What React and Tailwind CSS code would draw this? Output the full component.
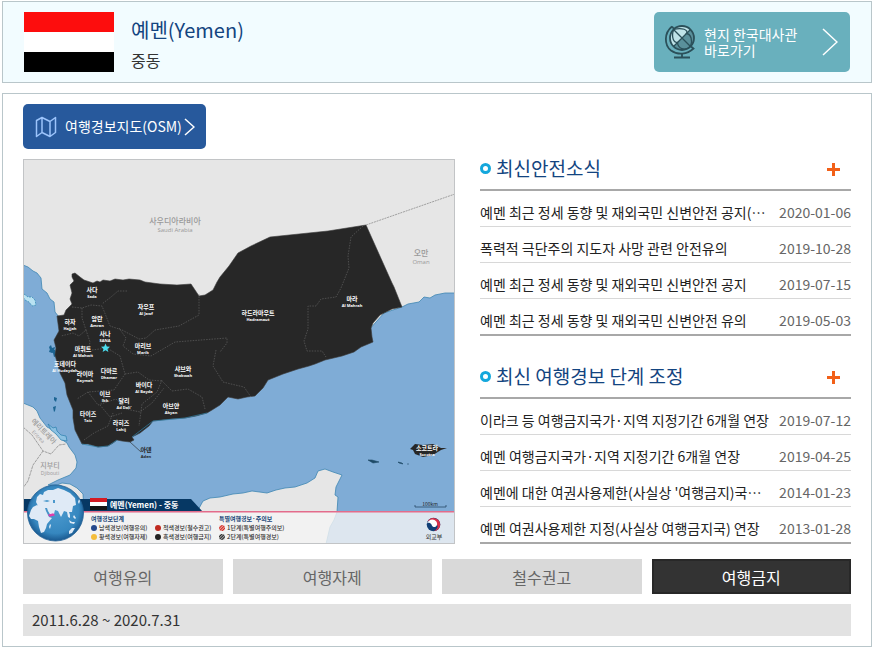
import React from "react";

const news = [
  ["예멘 최근 정세 동향 및 재외국민 신변안전 공지(…", "2020-01-06"],
  ["폭력적 극단주의 지도자 사망 관련 안전유의", "2019-10-28"],
  ["예멘 최근 정세 동향 및 재외국민 신변안전 공지", "2019-07-15"],
  ["예멘 최근 정세 동향 및 재외국민 신변안전 유의", "2019-05-03"],
];

const alerts = [
  ["이라크 등 여행금지국가·지역 지정기간 6개월 연장", "2019-07-12"],
  ["예멘 여행금지국가·지역 지정기간 6개월 연장", "2019-04-25"],
  ["예멘에 대한 여권사용제한(사실상 '여행금지)국…", "2014-01-23"],
  ["예멘 여권사용제한 지정(사실상 여행금지국) 연장", "2013-01-28"],
];

const levels = ["여행유의", "여행자제", "철수권고", "여행금지"];

// Governorate labels: Korean name, Latin name, centre x, baseline y
const regions = [
  ["사다", "Sada", 92, 292],
  ["자우프", "Al Jawf", 146, 309],
  ["하자", "Hajjah", 70, 324],
  ["암란", "Amran", 97, 321],
  ["사나", "SANA", 105, 336],
  ["마휘트", "Al Mahwit", 83, 351],
  ["마리브", "Marib", 143, 348],
  ["호데이다", "Al Hudaydah", 65, 366],
  ["라이마", "Raymah", 85, 376],
  ["다마르", "Dhamar", 109, 373],
  ["샤브와", "Shabwah", 183, 371],
  ["바이다", "Al Bayda", 144, 387],
  ["이브", "Ibb", 105, 396],
  ["달리", "Ad Dali'", 124, 403],
  ["아브얀", "Abyan", 171, 408],
  ["타이즈", "Taiz", 88, 416],
  ["라히즈", "Lahij", 121, 425],
  ["하드라마우트", "Hadramaut", 258, 315],
  ["마라", "Al Mahrah", 352, 301],
  ["소코트라", "Socotra", 427, 450],
];

const legend = [
  ["#26498c", "남색경보(여행유의)", 94, 528],
  ["#f4bd3c", "황색경보(여행자제)", 94, 537],
  ["#c02a20", "적색경보(철수권고)", 158, 528],
  ["#222222", "흑색경보(여행금지)", 158, 537],
  ["url(#hatchRed)", "1단계(특별여행주의보)", 222, 528],
  ["url(#hatchDark)", "2단계(특별여행경보)", 222, 537],
];

function YemenMap() {
  return (
    <svg viewBox="23 159 432 385" className="block h-auto w-full" role="img" aria-label="예멘 여행경보 지도">
      <defs>
        <pattern id="hatchRed" width="2" height="2" patternUnits="userSpaceOnUse" patternTransform="rotate(45)">
          <rect width="2" height="2" fill="#f3c9c6" />
          <rect width="1.2" height="2" fill="#d0241c" />
        </pattern>
        <pattern id="hatchDark" width="2" height="2" patternUnits="userSpaceOnUse" patternTransform="rotate(45)">
          <rect width="2" height="2" fill="#cccccc" />
          <rect width="1.2" height="2" fill="#222222" />
        </pattern>
        <radialGradient id="ocean" cx="50%" cy="45%" r="55%">
          <stop offset="0" stopColor="#4c9bd0" />
          <stop offset="0.75" stopColor="#3687bf" />
          <stop offset="1" stopColor="#19588f" />
        </radialGradient>
      </defs>
      <rect x="23" y="159" width="432" height="385" fill="#e6e6e6" />
      {/* Sea */}
      <path
        d="M23 265 L28 267 33 271 37 273 41 278 42 289 47 293 50 299 54 302 55 312 59 317 200 330 360 340 384 313 402 307 408 304 419 302 424 297 430 298 435 295 445 293 455 293 V544 H326 L330 527 334 520 337 512 338 497 335 495 336 487 339 481 342 475 333 472 325 469 318 471 315 478 307 483 295 487 285 488 276 490 267 493 252 491 243 493 233 494 220 497 210 498 203 501 197 512 H84 L83 494 77 488 70 484 62 483 57 485 48 485 58 480 70 475 76 468 77 462 75 455 69 447 67 443 61 439 53 430 47 427 40 418 37 411 33 407 23 403Z"
        fill="#7facd6"
        stroke="#3f86b3"
        strokeWidth="0.8"
      />
      {/* Red Sea islands */}
      <g fill="#1c6492">
        <path d="M49 347l2-2 1 3 3-1-1 4 2 4-2 1-1-4-2 1zM50 349l5 1 2 6-3 1-1-4-4-1zM54 397l3 1-1 4-2-2zM53 407l3-1-1 5-1 1z" />
      </g>
      <path d="M24 294l4 3 4 0 3 3 1 5-4 1-3-4-4-2-2-3z" fill="#b9e2f2" stroke="#2b87b0" strokeWidth="0.7" strokeDasharray="2 1" />
      <path d="M48 424l5 4 3-1 1 4 4 4 5 1 1 5-6-1-5-6-5-4z" fill="#8cc1e2" stroke="#2b7fae" strokeWidth="0.7" />
      {/* Yemen */}
      <path
        d="M75 273 L80 277 84 280 87 281 93 283 97 281 100 282 103 280 110 281 115 279 123 280 129 279 140 280 145 282 160 284 177 285 191 284 199 296 205 295 213 290 217 282 220 277 229 266 238 253 251 246 270 237 328 231 366 225 392 283 394 287 402 307 392 309 380 315 373 323 371 328 372 337 373 342 361 347 354 352 342 356 325 360 315 364 309 366 298 369 283 374 268 380 263 388 255 396 247 397 238 399 228 397 220 405 212 410 207 413 196 416 185 418 170 419 153 421 149 426 140 433 132 437 134 440 130 442 122 441 117 440 113 443 108 446 98 447 88 444 82 444 75 430 73 418 73 410 67 395 65 383 60 373 57 362 55 355 56 348 54 340 59 331 57 316 64 315 66 310 72 304 70 299 72 293 70 285 74 281 72 277 72 274Z"
        fill="#272727"
        stroke="#3a3a3a"
        strokeWidth="0.6"
      />
      <path d="M82 444 L98 447 108 446 117 440 M132 437 L153 421 185 418 207 413" fill="none" stroke="#2f81a8" strokeWidth="0.7" />
      <path d="M410 449l5-5 8 1 10-1 8 4 6 0-6 2-8 5-10 2-8-3-2-4z" fill="#272727" />
      <path d="M368 460l4 0 7 2-6 1zM398 462l4 1 1 1-4-1zM407 464h2" fill="#1e4a66" stroke="#1e4a66" strokeWidth="0.6" />
      {/* Inner boundaries */}
      <g fill="none" stroke="#777777" strokeWidth="0.5" strokeDasharray="1.5 1.2">
        <path d="M127 291l-9 0-7 6-9 7M72 307l10 1 9-3 11 1 4 10 4 10 12 4 17 9 7-1 9-8 24-4 20-11v-21M82 308v10l4 12-7 6-6-3-12 3M86 330l4 12-2 10h-15M119 328l7 10-3 8 10 8 18 2 24-14 52-4 0 5-7 9" />
        <path d="M92 350l15-2 13 8 5 18-11 16-26 2-11 7M125 374l13-2 11 8 13 1 10 10 16-2 14 8 3 12M88 392l10 13 18-6 10 10 14 3 12-9 12-15M100 405l10 12 12-4M84 440l10-7 14-7 5-13M162 380l-5 12-15 12-3 22M216 350l-3 16 10 16 8 2 13 3 7 10" />
        <path d="M363 226l-12 11-3 19 1 12-8 20-5 9-15 2-5 7h-8v23l-4 12 3 10h15l4 6" />
      </g>
      <g fill="none" stroke="#8d8d8d" strokeWidth="0.8">
        <path d="M366 225l89-31" strokeDasharray="2 0.8" />
        <path d="M23 427l9 8 11 16 8 3 8-9 7-1M43 451l-10 14-5 16-5 7" strokeDasharray="3 0.7" />
      </g>
      <path d="M105.500 343.500l1.300 3 3.200.2-2.500 2.200.9 3.200-2.900-1.800-2.900 1.800.9-3.200-2.500-2.200 3.200-.2z" fill="#4bdcee" />
      <g textAnchor="middle">
        {regions.map(([ko, en, x, y]) => (
          <g key={en} fill="#ffffff">
            <text x={x} y={y} fontSize="6" fontWeight="700">{ko}</text>
            <text x={x} y={Number(y) + 6} fontSize="4" fontWeight="700" className="font-['Open_Sans',sans-serif]">{en}</text>
          </g>
        ))}
        <g fill="#222222" fontWeight="700">
          <text x="146" y="452" fontSize="6">아덴</text>
          <text x="146" y="458" fontSize="4" className="font-['Open_Sans',sans-serif]">Aden</text>
        </g>
        <path d="M130 442l11 10" stroke="#222222" strokeWidth="0.6" />
        <g fill="#999999" fontWeight="500">
          <text x="175" y="224" fontSize="8">사우디아라비아</text>
          <text x="175" y="232" fontSize="6" className="font-['Open_Sans',sans-serif]">Saudi Arabia</text>
          <text x="421" y="256" fontSize="8">오만</text>
          <text x="421" y="264" fontSize="6" className="font-['Open_Sans',sans-serif]">Oman</text>
          <text x="50" y="468" fontSize="7">지부티</text>
          <text x="50" y="475" fontSize="5" className="font-['Open_Sans',sans-serif]">Djibouti</text>
          <g transform="rotate(46 42 433)">
            <text x="42" y="433" fontSize="7">에리트레아</text>
            <text x="42" y="440" fontSize="5" className="font-['Open_Sans',sans-serif]">Eritrea</text>
          </g>
        </g>
      </g>
      {/* Scale bar */}
      <path d="M415 505v2h31v-2" fill="none" stroke="#294a68" strokeWidth="0.8" />
      <text x="430" y="506" fontSize="5" textAnchor="middle" fill="#222222">100km</text>
      {/* Title banner and legend */}
      <path d="M23 499h168l12 13H23z" fill="#063864" />
      <rect x="23" y="512" width="432" height="32" fill="#f5f5f5" fillOpacity="0.8" />
      <rect x="23" y="511" width="432" height="1.500" fill="#e36c8b" />
      <rect x="90" y="498" width="17" height="4" fill="#d51b23" />
      <rect x="90" y="502" width="17" height="4" fill="#ffffff" />
      <rect x="90" y="506" width="17" height="4" fill="#151515" />
      <text x="110" y="508" fontSize="8" fontWeight="700" fill="#ffffff">예멘(Yemen) - 중동</text>
      <g fontSize="6" fontWeight="700" fill="#164375">
        <text x="91" y="521">여행경보단계</text>
        <text x="219" y="521">특별여행경보·주의보</text>
      </g>
      {legend.map(([color, label, x, y]) => (
        <g key={label}>
          <circle cx={x} cy={y} r="3" fill={color} />
          <text x={Number(x) + 5} y={Number(y) + 2} fontSize="6" fontWeight="500" fill="#333333">{label}</text>
        </g>
      ))}
      {/* Globe */}
      <circle cx="55.500" cy="513" r="28" fill="url(#ocean)" stroke="#215f94" strokeWidth="0.8" />
      <g fill="#dfeaf6">
        <path d="M36 502l1-5 3-3 3 1 1-3 4-2 5 0 5-2 6 2 6 3 5 5 1 7-3 1-1 6-3 0 1 3 0 3-2-1-1-5-3-1-3 6-3-6-3-1-1 4-3 2-3-5-1-3-4 0-3 0-2-2z" />
        <path d="M31 510l2-3 4-2 4 2 4 1 1 3 3 6 3 1-5 6-1 4-2 4-3 1-2-6-1-6-4-2-3 0-2-3zM69 520l3 2 3 0-1 2-4-1zM74 515l2 3-1 1-2-2zM78 502l1-3 1 2-1 3zM69 531l3-3 3 0-3 5-3 1zM49 527l1-3 1 1-1 4z" />
      </g>
      <path d="M43 501l4-1 3 1-3 1zM53 500l2 0 0 3-2 0z" fill="#4b98cc" />
      <path d="M49 515l4-1 1 1-4 1z" fill="#df3bab" stroke="#df3bab" strokeWidth="1.200" />
      {/* Ministry emblem */}
      <circle cx="433.500" cy="524.500" r="6.800" fill="#113f76" />
      <path d="M427.500 521.500a6.800 6.800 0 0 1 12.700 2.500c.3 4-3 7-6 7 3-2 4-4 3-6s-4-2-5-3-3-2-4.700-.5z" fill="#d9304a" />
      <path d="M426.800 524c1.500-5 7-6 9.500-2.500 2 3 0 6-2.500 5.500s-1.500-3-4-4c-1.500-.5-2.500 0-3 1z" fill="#ffffff" />
      <text x="434" y="539" fontSize="6" textAnchor="middle" fill="#333333">외교부</text>
    </svg>
  );
}

function GlobeIcon() {
  return (
    <svg width="34" height="38" viewBox="0 0 34 38" fill="none" aria-hidden="true">
      <circle cx="18" cy="15" r="12" fill="#bfe3e8" />
      <path d="M26.500 6.500A12 12 0 0 1 9.500 23.500z" fill="#5a909b" />
      <g stroke="#2b505a" strokeWidth="1.300">
        <circle cx="18" cy="15" r="12" strokeWidth="1.800" />
        <path d="M26.500 6.500L9.500 23.500" />
        <path d="M9.500 6.500C18 4 25 7 22.500 10.500C27 11 29 18 26.500 23.500" />
        <path d="M9.500 6.500L26.500 23.500" />
        <path d="M9.500 6.500C7 15 10 20 13.500 19.500C14 25 20 29 26.500 23.500" />
        <path d="M8 3.500l2 2.500M8 3.500C0 10 0 22 7 27.500c7 5 16 4 22.500-2L27 23.500M18 31v3.500M10 34.500h16" strokeWidth="1.800" />
      </g>
    </svg>
  );
}

function Chevron({ width, height }) {
  return (
    <svg width={width} height={height} viewBox={`0 0 ${width} ${height}`} fill="none" stroke="#ffffff" strokeWidth="1.500" aria-hidden="true">
      <path d={`M1 1L${width - 1} ${height / 2}L1 ${height - 1}`} />
    </svg>
  );
}

function NoticeList({ title, items }) {
  return (
    <section>
      <div className="flex h-8 items-start justify-between border-b-2 border-[#a8a8a8] pr-[11px]">
        <h2 className="flex items-center gap-[5px] text-[19px] leading-[18px] text-[#134480]">
          <span className="size-[11px] rounded-full border-[3px] border-[#14a7dc] bg-white" />
          {title}
        </h2>
        <button type="button" aria-label={`${title} 더보기`} className="pt-1">
          <svg width="13" height="13" viewBox="0 0 13 13" fill="#f26018" aria-hidden="true">
            <path d="M5 0h3v5h5v3H8v5H5V8H0V5h5z" />
          </svg>
        </button>
      </div>
      <ul className="border-b border-[#a8a8a8]">
        {items.map(([text, date]) => (
          <li key={text} className="flex h-9 items-center justify-between gap-2 border-b border-[#d8d8d8] pt-[6px] text-[14px] leading-5 last:border-[#a8a8a8]">
            <a href="#" className="min-w-0 truncate text-[#222222]">{text}</a>
            <time className="shrink-0 text-[#666666]">{date}</time>
          </li>
        ))}
      </ul>
    </section>
  );
}

export default function App() {
  return (
    <div className="bg-white pt-px pl-[2px] font-['Noto_Sans_CJK_KR',sans-serif]">
      <header className="flex items-start justify-between border border-[#b9c6ca] bg-[#f2fcff] py-[10px] pr-[21px] pl-[21px]">
        <div className="flex gap-[17px]">
          <svg width="90" height="60" viewBox="0 0 90 60" role="img" aria-label="예멘 국기">
            <rect width="90" height="20" fill="#fd0d0d" />
            <rect y="20" width="90" height="20" fill="#ffffff" />
            <rect y="40" width="90" height="20" fill="#000000" />
          </svg>
          <div className="flex flex-col gap-1 pt-1">
            <h1 className="text-[20px] leading-7 text-[#134480]">예멘(Yemen)</h1>
            <p className="text-[16px] leading-6 text-[#333333]">중동</p>
          </div>
        </div>
        <a href="#" className="flex h-[60px] w-[196px] items-center rounded-[5px] bg-[#69b0bd] pr-3 pl-[10px] text-[14px] leading-4 text-white">
          <GlobeIcon />
          <span className="ml-[6px] flex-1">현지 한국대사관<br />바로가기</span>
          <Chevron width={16} height={28} />
        </a>
      </header>

      <main className="mt-[10px] border border-[#b9c6ca] px-5 py-[10px]">
        <a href="#" className="flex h-[45px] w-[183px] items-center rounded-[5px] bg-[#27599c] pr-[11px] pl-3 text-[14px] text-white">
          <svg width="22" height="22" viewBox="0 0 22 22" fill="none" stroke="#9cc4fb" strokeWidth="1.500" strokeLinejoin="round" aria-hidden="true">
            <path d="M1.500 4.500l5.500-3 8 4 5.500-4v15l-5.500 4-8-4-5.500 4zM7 1.500v15M15 5.500v15" />
          </svg>
          <span className="ml-2 flex-1 whitespace-nowrap">여행경보지도(OSM)</span>
          <Chevron width={11} height={18} />
        </a>

        <div className="mt-[10px] grid grid-cols-[432fr_371fr] gap-[25px]">
          <div className="relative">
            <YemenMap />
            <div className="pointer-events-none absolute inset-0 border border-[#c2c4c6]" />
          </div>
          <div className="flex flex-col justify-between">
            <NoticeList title="최신안전소식" items={news} />
            <NoticeList title="최신 여행경보 단계 조정" items={alerts} />
          </div>
        </div>

        <div className="mt-[15px] grid grid-cols-4 gap-[10px]">
          {levels.map((level, i) => (
            <button
              key={level}
              type="button"
              aria-pressed={i === 3}
              className={
                i === 3
                  ? "h-[35px] border-2 border-[#282828] bg-[#333333] text-[16px] leading-6 text-white"
                  : "h-[35px] bg-[#d9d9d9] text-[16px] leading-6 text-[#666666]"
              }
            >
              {level}
            </button>
          ))}
        </div>
        <p className="mt-[10px] bg-[#e2e2e2] px-[9px] py-1 text-[15px] leading-6 text-[#333333]">2011.6.28 ~ 2020.7.31</p>
      </main>
    </div>
  );
}
